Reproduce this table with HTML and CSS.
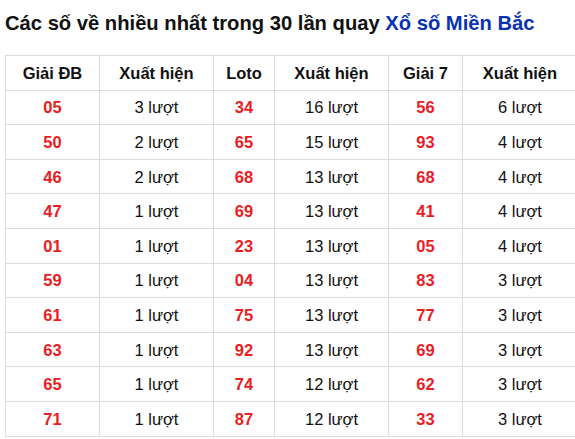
FILE: index.html
```html
<!DOCTYPE html>
<html lang="vi">
<head>
<meta charset="utf-8">
<link rel="stylesheet" href="styles.css">
</head>
<body>
<h2 class="title">Các số về nhiều nhất trong 30 lần quay <span class="hl">Xổ số Miền Bắc</span></h2>
<table class="stats">
<colgroup>
<col class="c1"><col class="c2"><col class="c3"><col class="c4"><col class="c5"><col class="c6">
</colgroup>
<thead>
<tr><th>Giải ĐB</th><th>Xuất hiện</th><th>Loto</th><th>Xuất hiện</th><th>Giải 7</th><th>Xuất hiện</th></tr>
</thead>
<tbody>
<tr><td class="num">05</td><td>3 lượt</td><td class="num">34</td><td>16 lượt</td><td class="num">56</td><td>6 lượt</td></tr>
<tr><td class="num">50</td><td>2 lượt</td><td class="num">65</td><td>15 lượt</td><td class="num">93</td><td>4 lượt</td></tr>
<tr><td class="num">46</td><td>2 lượt</td><td class="num">68</td><td>13 lượt</td><td class="num">68</td><td>4 lượt</td></tr>
<tr><td class="num">47</td><td>1 lượt</td><td class="num">69</td><td>13 lượt</td><td class="num">41</td><td>4 lượt</td></tr>
<tr><td class="num">01</td><td>1 lượt</td><td class="num">23</td><td>13 lượt</td><td class="num">05</td><td>4 lượt</td></tr>
<tr><td class="num">59</td><td>1 lượt</td><td class="num">04</td><td>13 lượt</td><td class="num">83</td><td>3 lượt</td></tr>
<tr><td class="num">61</td><td>1 lượt</td><td class="num">75</td><td>13 lượt</td><td class="num">77</td><td>3 lượt</td></tr>
<tr><td class="num">63</td><td>1 lượt</td><td class="num">92</td><td>13 lượt</td><td class="num">69</td><td>3 lượt</td></tr>
<tr><td class="num">65</td><td>1 lượt</td><td class="num">74</td><td>12 lượt</td><td class="num">62</td><td>3 lượt</td></tr>
<tr><td class="num">71</td><td>1 lượt</td><td class="num">87</td><td>12 lượt</td><td class="num">33</td><td>3 lượt</td></tr>
</tbody>
</table>
</body>
</html>
```
FILE: styles.css
```css
html, body {
  margin: 0;
  padding: 0;
  background: #fff;
  overflow: hidden;
}
body {
  padding: 0 0 0 5px;
  font-family: "Liberation Sans", Arial, sans-serif;
  color: #111;
  width: 700px;
}
.title {
  margin: 0;
  padding-top: 11px;
  font-size: 20.2px;
  line-height: 24px;
  font-weight: bold;
  color: #111;
  height: 55px;
  box-sizing: border-box;
}
.hl {
  color: #0a32b0;
}
.stats {
  border-collapse: collapse;
  table-layout: fixed;
  width: 572px;
  font-size: 16.5px;
}
.c1 { width: 94px; }
.c2 { width: 114px; }
.c3 { width: 61px; }
.c4 { width: 114px; }
.c5 { width: 74px; }
.c6 { width: 115px; }
.stats th, .stats td {
  border: 1px solid #dcdcdc;
  text-align: center;
  padding: 0;
  height: 33.6px;
  line-height: 20px;
}
.stats th {
  font-weight: bold;
  color: #111;
}
.stats td {
  color: #111;
}
.stats td.num {
  color: #ea1c24;
  font-weight: bold;
}
```
